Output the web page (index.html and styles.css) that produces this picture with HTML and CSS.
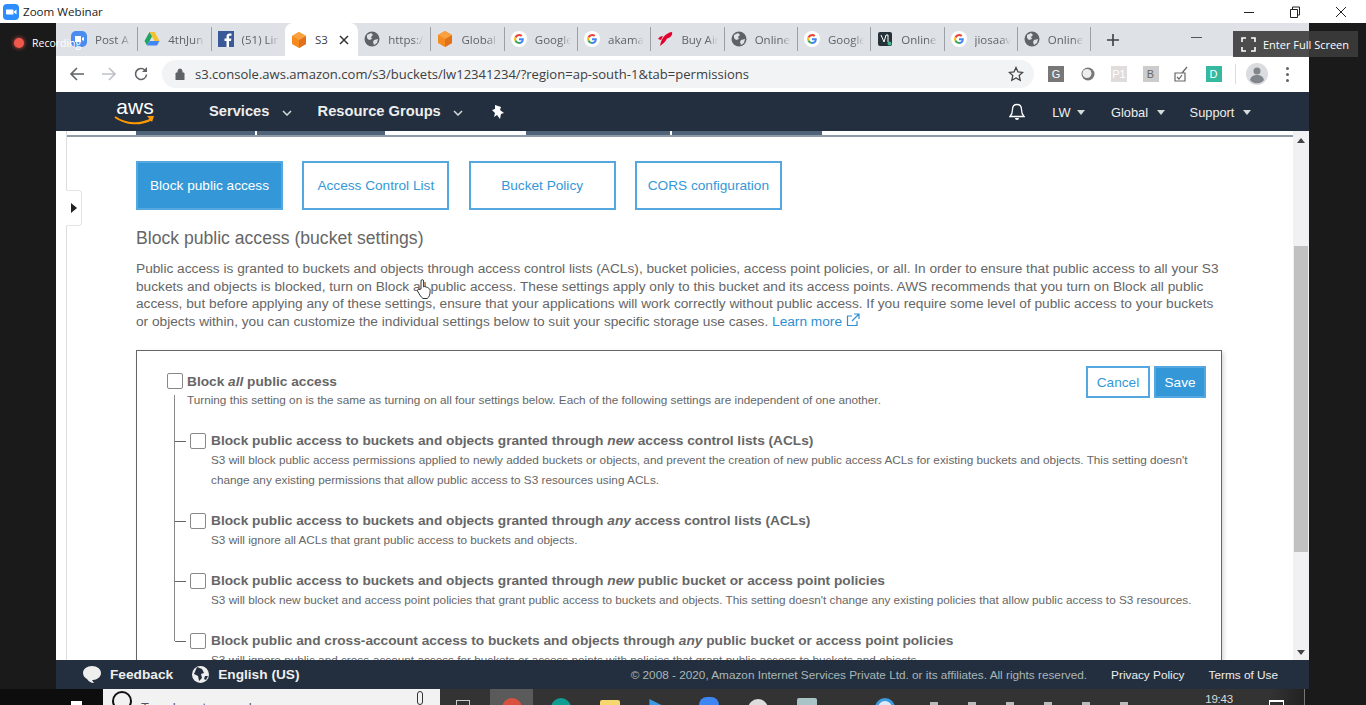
FILE: index.html
```html
<!DOCTYPE html>
<html lang="en">

<head>
    <meta charset="UTF-8">
    <meta name="viewport" content="width=device-width, initial-scale=1.0">
    <title>Zoom Webinar</title>
    <link rel="stylesheet" href="styles.css">
</head>

<body>
    <svg class="defs" width="0" height="0">
        <symbol id="i-cube" viewBox="0 0 16 16">
            <path d="M8 0l7 4v8l-7 4-7-4V4z" fill="#f58a1f" />
            <path d="M8 8l7-4v8l-7 4z" fill="#e0701a" />
            <path d="M8 0l7 4-7 4-7-4z" fill="#f9a03f" />
        </symbol>
        <symbol id="i-globe" viewBox="0 0 16 16">
            <circle cx="8" cy="8" r="7.5" fill="#5f6368" />
            <path d="M3 4l4-2 2 2-2 2 1 2-3 1-2-2zM10 9l4-1-1 4-3 2-1-3z" fill="#dee1e6" />
        </symbol>
        <symbol id="i-g" viewBox="0 0 16 16">
            <circle cx="8" cy="8" r="8" fill="#fff" />
            <path d="M12.8 8.2c0 2.900-2 4.800-4.800 4.800V11c1.400 0 2.400-.7 2.700-1.800H8V7.300h4.700z" fill="#4285f4" />
            <path d="M8 3a5 5 0 0 1 3.400 1.300L10 5.700A3 3 0 0 0 5.300 7L3.600 5.700A5 5 0 0 1 8 3z" fill="#ea4335" />
            <path d="M3.600 5.700L5.300 7a3 3 0 0 0 0 2L3.600 10.300a5 5 0 0 1 0-4.600z" fill="#fbbc05" />
            <path d="M3.600 10.300L5.300 9A3 3 0 0 0 8 11v2a5 5 0 0 1-4.400-2.700z" fill="#34a853" />
        </symbol>
        <symbol id="i-caret" viewBox="0 0 8 5">
            <path d="M0 0h8L4 5z" fill="currentColor" />
        </symbol>
    </svg>

    <header class="titlebar">
        <svg class="zoom-logo" width="16" height="16" viewBox="0 0 16 16">
            <rect width="16" height="16" rx="4" fill="#2d8cff" />
            <path d="M3 5.500h6.500a1 1 0 0 1 1 1v4H4a1 1 0 0 1-1-1zM11 7.500l2.500-2v5l-2.500-2z" fill="#fff" />
        </svg>
        <span class="app-name">Zoom Webinar</span>
        <div class="win-controls">
            <svg width="12" height="12" viewBox="0 0 12 12"><path d="M1 6.500h10" stroke="#222" /></svg>
            <svg width="12" height="12" viewBox="0 0 12 12"><path d="M1.500 3.500h7v8h-7zM3.500 3V1h7v8H9" fill="none" stroke="#222" /></svg>
            <svg width="12" height="12" viewBox="0 0 12 12"><path d="M1 1l10 10M11 1L1 11" stroke="#222" /></svg>
        </div>
    </header>

    <div class="stage">
        <div class="side-left"></div>

        <main class="browser">
            <div class="tabstrip">
                <div class="tab">
                    <svg width="16" height="16" viewBox="0 0 16 16"><rect width="16" height="16" rx="5" fill="#4a8cf0" /><path d="M4 5h6v6H4zM11 7l2-1v4l-2-1z" fill="#fff" /></svg>
                    <span class="tab-text">Post A</span>
                </div>
                <div class="tab">
                    <svg width="16" height="16" viewBox="0 0 16 16"><path d="M5.500 1h5l5 9h-5z" fill="#f6c02c" /><path d="M5.500 1L.5 10 3 14.500 8 5.500z" fill="#1fa463" /><path d="M3 14.500h10l2.500-4.500h-10z" fill="#4285f4" /></svg>
                    <span class="tab-text">4thJun</span>
                </div>
                <div class="tab tab-before-active">
                    <svg width="16" height="16" viewBox="0 0 16 16"><rect width="16" height="16" fill="#3b5998" /><path d="M11 16v-6h2l.4-2.500H11V6c0-.8.3-1.200 1.200-1.200h1.300V2.600C13 2.500 12.400 2.500 11.700 2.500 9.800 2.500 8.500 3.600 8.500 5.700v1.800h-2V10h2v6z" fill="#fff" /></svg>
                    <span class="tab-text">(51) Lin</span>
                </div>
                <div class="tab tab-active">
                    <svg width="16" height="16"><use href="#i-cube" /></svg>
                    <span class="tab-text">S3</span>
                    <svg class="tab-close" width="10" height="10" viewBox="0 0 10 10"><path d="M1 1l8 8M9 1L1 9" stroke="#333" stroke-width="1.500" /></svg>
                </div>
                <div class="tab">
                    <svg width="16" height="16"><use href="#i-globe" /></svg>
                    <span class="tab-text">https:/</span>
                </div>
                <div class="tab">
                    <svg width="16" height="16"><use href="#i-cube" /></svg>
                    <span class="tab-text">Global</span>
                </div>
                <div class="tab">
                    <svg width="16" height="16"><use href="#i-g" /></svg>
                    <span class="tab-text">Google</span>
                </div>
                <div class="tab">
                    <svg width="16" height="16"><use href="#i-g" /></svg>
                    <span class="tab-text">akama</span>
                </div>
                <div class="tab">
                    <svg width="16" height="16" viewBox="0 0 16 16"><path d="M3 15C4 8 8 2 15 1c1 3-2 6-5 6.500C9 10 6 13 3 15zM1 8c1-2 3-3 5-3L4 9z" fill="#e4002b" /></svg>
                    <span class="tab-text">Buy Air</span>
                </div>
                <div class="tab">
                    <svg width="16" height="16"><use href="#i-globe" /></svg>
                    <span class="tab-text">Online</span>
                </div>
                <div class="tab">
                    <svg width="16" height="16"><use href="#i-g" /></svg>
                    <span class="tab-text">Google</span>
                </div>
                <div class="tab">
                    <svg width="16" height="16" viewBox="0 0 16 16"><rect x="1" y="1" width="14" height="14" rx="2" fill="#26323a" /><path d="M4 4l3 7 2-7h2v7" fill="none" stroke="#fff" /><circle cx="12.500" cy="12.500" r="2" fill="#3fb68b" /></svg>
                    <span class="tab-text">Online</span>
                </div>
                <div class="tab">
                    <svg width="16" height="16"><use href="#i-g" /></svg>
                    <span class="tab-text">jiosaav</span>
                </div>
                <div class="tab">
                    <svg width="16" height="16"><use href="#i-globe" /></svg>
                    <span class="tab-text">Online</span>
                </div>
                <svg class="tab-new" width="14" height="14" viewBox="0 0 14 14"><path d="M7 1v12M1 7h12" stroke="#3c4043" stroke-width="1.600" /></svg>
                <span class="tab-ghost"></span>
            </div>

            <div class="toolbar">
                <svg class="tool" width="16" height="16" viewBox="0 0 16 16"><path d="M15 8H2M8 2L2 8l6 6" fill="none" stroke="#5f6368" stroke-width="1.600" /></svg>
                <svg class="tool" width="16" height="16" viewBox="0 0 16 16"><path d="M1 8h13M8 2l6 6-6 6" fill="none" stroke="#bdc1c6" stroke-width="1.600" /></svg>
                <svg class="tool" width="16" height="16" viewBox="0 0 16 16"><path d="M13.500 8.500A5.500 5.500 0 1 1 12 4.200" fill="none" stroke="#5f6368" stroke-width="1.600" /><path d="M14 1v5h-5z" fill="#5f6368" /></svg>
                <div class="omnibox">
                    <svg width="10" height="12" viewBox="0 0 10 12"><path d="M1 5h8v7H1zM3 5V3a2 2 0 0 1 4 0v2" fill="#5f6368" stroke="#5f6368" fill-rule="evenodd" /></svg>
                    <span class="url">s3.console.aws.amazon.com/s3/buckets/lw12341234/?region=ap-south-1&amp;tab=permissions</span>
                    <svg class="star" width="16" height="16" viewBox="0 0 16 16"><path d="M8 1.500l2 4.400 4.700.5-3.500 3.200 1 4.700L8 12l-4.200 2.300 1-4.700L1.300 6.400 6 5.900z" fill="none" stroke="#444" stroke-width="1.300" /></svg>
                </div>
                <div class="extensions">
                    <span class="ext ext-g">G</span>
                    <svg class="ext-svg" width="16" height="16" viewBox="0 0 16 16"><circle cx="8" cy="8" r="6.500" fill="#777" /><circle cx="7" cy="7.500" r="4.500" fill="#eee" /></svg>
                    <span class="ext ext-p">P1</span>
                    <span class="ext ext-b">B</span>
                    <svg class="ext-svg" width="16" height="16" viewBox="0 0 16 16"><path d="M1 7h10v8H1zM3 11l2 2 3-4M8 7l5-6" fill="none" stroke="#666" stroke-width="1.200" /></svg>
                    <span class="ext ext-d">D</span>
                </div>
                <div class="tool-sep"></div>
                <div class="avatar">
                    <svg width="22" height="22" viewBox="0 0 22 22"><circle cx="11" cy="11" r="11" fill="#dadce0" /><circle cx="11" cy="8" r="3.500" fill="#80868b" /><path d="M4 17c1-4 4-5 7-5s6 1 7 5a9 9 0 0 1-14 0z" fill="#80868b" /></svg>
                </div>
                <div class="menu-dots"><i></i><i></i><i></i></div>
            </div>

            <nav class="awsnav">
                <div class="aws-logo">
                    <span class="aws-word">aws</span>
                    <svg width="42" height="11" viewBox="0 0 42 11"><path d="M1 2c11 8 26 8 37 2" fill="none" stroke="#f90" stroke-width="2" /><path d="M33 1l7 0-2 6z" fill="#f90" /></svg>
                </div>
                <a class="nav-main nav-services">Services <svg class="nav-chev" width="10" height="6" viewBox="0 0 10 6"><path d="M1 1l4 4 4-4" fill="none" stroke="#d5dbdb" stroke-width="1.500" /></svg></a>
                <a class="nav-main nav-groups">Resource Groups <svg class="nav-chev" width="10" height="6" viewBox="0 0 10 6"><path d="M1 1l4 4 4-4" fill="none" stroke="#d5dbdb" stroke-width="1.500" /></svg></a>
                <svg class="nav-pin" width="14" height="14" viewBox="0 0 14 14"><path d="M4 0l6 2-1 3 4 3-3 1-1 5-3-4-3 2 1-4-3-3 3-1z" fill="#fff" /></svg>
                <div class="nav-right">
                    <svg class="nav-bell" width="16" height="18" viewBox="0 0 16 18"><path d="M8 1.500c3 0 4.500 2.300 4.500 5 0 4 1 5.500 2.500 7H1c1.500-1.500 2.500-3 2.500-7 0-2.700 1.500-5 4.500-5z" fill="none" stroke="#fff" stroke-width="1.300" /><path d="M6 15h4a2 2 0 0 1-4 0z" fill="#fff" /></svg>
                    <a class="nav-item nav-lw">LW <svg width="8" height="5"><use href="#i-caret" /></svg></a>
                    <a class="nav-item nav-global">Global <svg width="8" height="5"><use href="#i-caret" /></svg></a>
                    <a class="nav-item nav-support">Support <svg width="8" height="5"><use href="#i-caret" /></svg></a>
                </div>
            </nav>

            <div class="console">
                <div class="rail">
                    <div class="rail-handle"><svg width="6" height="10" viewBox="0 0 6 10"><path d="M0 0l6 5-6 5z" fill="#222" /></svg></div>
                </div>
                <section class="pane">
                    <div class="tab-remnants">
                        <span class="remnant remnant-a"></span>
                        <span class="remnant remnant-b"></span>
                    </div>

                    <div class="subtabs">
                        <a class="subtab subtab-on">Block public access</a>
                        <a class="subtab">Access Control List</a>
                        <a class="subtab">Bucket Policy</a>
                        <a class="subtab">CORS configuration</a>
                    </div>

                    <h2 class="section-title">Block public access (bucket settings)</h2>
                    <p class="intro">Public access is granted to buckets and objects through access control lists (ACLs), bucket policies, access point policies, or all. In order to ensure that public access to all your S3<br>buckets and objects is blocked, turn on Block all public access. These settings apply only to this bucket and its access points. AWS recommends that you turn on Block all public<br>access, but before applying any of these settings, ensure that your applications will work correctly without public access. If you require some level of public access to your buckets<br>or objects within, you can customize the individual settings below to suit your specific storage use cases. <a class="learn">Learn more <svg width="14" height="14" viewBox="0 0 14 14"><path d="M11 8v4.500H1.500V3H6M8 1h5v5M13 1L6 8" fill="none" stroke="#2e8fd0" stroke-width="1.200" /></svg></a></p>

                    <div class="settings-box">
                        <div class="box-head">
                            <div class="check-row">
                                <span class="checkbox"></span>
                                <span class="all-title">Block <em>all</em> public access</span>
                            </div>
                            <div class="box-actions">
                                <a class="btn btn-cancel">Cancel</a>
                                <a class="btn btn-save">Save</a>
                            </div>
                        </div>
                        <p class="all-desc">Turning this setting on is the same as turning on all four settings below. Each of the following settings are independent of one another.</p>

                        <div class="tree">
                            <div class="item">
                                <span class="tick"></span>
                                <span class="checkbox"></span>
                                <div class="item-body">
                                    <div class="item-title">Block public access to buckets and objects granted through <em>new</em> access control lists (ACLs)</div>
                                    <div class="item-desc">S3 will block public access permissions applied to newly added buckets or objects, and prevent the creation of new public access ACLs for existing buckets and objects. This setting doesn't<br>change any existing permissions that allow public access to S3 resources using ACLs.</div>
                                </div>
                            </div>
                            <div class="item">
                                <span class="tick"></span>
                                <span class="checkbox"></span>
                                <div class="item-body">
                                    <div class="item-title">Block public access to buckets and objects granted through <em>any</em> access control lists (ACLs)</div>
                                    <div class="item-desc">S3 will ignore all ACLs that grant public access to buckets and objects.</div>
                                </div>
                            </div>
                            <div class="item">
                                <span class="tick"></span>
                                <span class="checkbox"></span>
                                <div class="item-body">
                                    <div class="item-title">Block public access to buckets and objects granted through <em>new</em> public bucket or access point policies</div>
                                    <div class="item-desc">S3 will block new bucket and access point policies that grant public access to buckets and objects. This setting doesn't change any existing policies that allow public access to S3 resources.</div>
                                </div>
                            </div>
                            <div class="item">
                                <span class="tick"></span>
                                <span class="checkbox"></span>
                                <div class="item-body">
                                    <div class="item-title">Block public and cross-account access to buckets and objects through <em>any</em> public bucket or access point policies</div>
                                    <div class="item-desc">S3 will ignore public and cross-account access for buckets or access points with policies that grant public access to buckets and objects.</div>
                                </div>
                            </div>
                        </div>
                    </div>
                </section>
                <div class="scrollbar">
                    <svg width="8" height="5"><path d="M0 5h8L4 0z" fill="#444" /></svg>
                    <div class="thumb"></div>
                    <svg width="8" height="5"><path d="M0 0h8L4 5z" fill="#444" /></svg>
                </div>
            </div>

            <footer class="awsfoot">
                <svg class="foot-icon" width="18" height="17" viewBox="0 0 18 17"><path d="M9 0c5 0 9 3 9 7s-4 7-8 7l-1 0 2 3c-3 0-6-2-7-4-2-1-4-3-4-6 0-4 4-7 9-7z" fill="#eee" /></svg>
                <a class="foot-link">Feedback</a>
                <svg class="foot-icon foot-globe" width="17" height="17" viewBox="0 0 17 17"><circle cx="8.500" cy="8.500" r="8.500" fill="#eee" /><path d="M5 1l5 2 2 4-3 1 1 4-3 3-1-5-4-2zM13 10l3 0-2 4-2-1z" fill="#232f3e" /></svg>
                <a class="foot-link">English (US)</a>
                <span class="foot-copy">© 2008 - 2020, Amazon Internet Services Private Ltd. or its affiliates. All rights reserved.</span>
                <a class="foot-legal foot-privacy">Privacy Policy</a>
                <a class="foot-legal foot-terms">Terms of Use</a>
            </footer>
        </main>

        <div class="side-right"></div>
    </div>

    <div class="taskbar">
        <div class="tb-start"><span class="win-logo"></span></div>
        <div class="tb-search">
            <span class="tb-ring"></span>
            <span class="tb-hint">Type here to search</span>
            <span class="tb-mic"></span>
        </div>
        <div class="tb-apps">
            <span class="tb-task"></span>
            <span class="tb-cell tb-cell-on"><i class="tb-app tb-chrome"></i></span>
            <span class="tb-cell"><i class="tb-app tb-teal"></i></span>
            <span class="tb-cell"><i class="tb-app tb-folder"></i></span>
            <span class="tb-cell"><i class="tb-app tb-play"></i></span>
            <span class="tb-cell"><i class="tb-app tb-zoom"></i></span>
            <span class="tb-cell"><i class="tb-app tb-misc"></i></span>
            <span class="tb-cell"><i class="tb-app tb-pale"></i></span>
            <span class="tb-cell tb-cell-far"><i class="tb-app tb-round"></i></span>
            <span class="tb-tray"><i></i><i></i><i></i><i></i><i></i><i></i></span>
            <span class="tb-clock">19:43</span>
            <span class="tb-note"></span>
        </div>
        <div class="tb-end"></div>
    </div>

    <!-- things floating over the page -->
    <div class="recording"><span class="rec-dot"></span><span>Recording</span></div>
    <div class="fullscreen">
        <svg width="15" height="15" viewBox="0 0 15 15"><path d="M1 5V1h4M10 1h4v4M14 10v4h-4M5 14H1v-4" fill="none" stroke="#fff" stroke-width="1.600" /></svg>
        <span>Enter Full Screen</span>
    </div>
    <svg class="hand" width="16" height="22" viewBox="0 0 16 22"><path d="M5 11V3a1.300 1.300 0 0 1 2.600 0v6l1-.5 1.500.5 1.500.5 1.500 1c1 .5 1 1.500 1 3 0 3-1 6-3 7H7c-2-1-4-5-5.500-7.500-.5-1 .5-2 1.500-1.500z" fill="#fff" stroke="#333" /></svg>
</body>

</html>
```

FILE: styles.css
```css
* {
    box-sizing: border-box;
}

html,
body {
    margin: 0;
    width: 1366px;
    height: 705px;
    overflow: hidden;
}

body {
    font-family: "Liberation Sans", Arial, sans-serif;
    background: #1a1a1a;
    position: relative;
}

.defs {
    display: block;
    height: 0;
}

/* window title */
.titlebar {
    height: 23px;
    background: #fff;
    display: flex;
    align-items: center;
    padding-left: 3px;
}

.app-name {
    margin-left: 4px;
    font-family: "Open Sans", sans-serif;
    font-size: 11.6px;
    color: #222;
}

.win-controls {
    margin-left: auto;
    display: flex;
    gap: 34px;
    padding-right: 19px;
}

/* layout of the window */
.stage {
    display: flex;
    height: 666px;
}

.side-left {
    width: 56px;
    background: #1a1a1a;
}

.side-right {
    width: 57px;
    background: #1a1a1a;
}

.browser {
    width: 1253px;
    display: flex;
    flex-direction: column;
    background: #fff;
}

/* chrome tabs */
.tabstrip {
    height: 33px;
    flex: none;
    background: #dee1e6;
    display: flex;
    align-items: center;
    padding-left: 9px;
}

.tab {
    width: 73.3px;
    height: 24px;
    margin-bottom: 1px;
    display: flex;
    align-items: center;
    gap: 8px;
    padding: 0 6px;
    border-right: 1px solid #9aa0a6;
    overflow: hidden;
    flex: none;
}

.tab svg {
    flex: none;
}

.tab-text {
    font-family: "Open Sans", sans-serif;
    font-size: 11.5px;
    color: #5f6368;
    white-space: nowrap;
    overflow: hidden;
    flex: 1;
    -webkit-mask-image: linear-gradient(to right, #000 70%, transparent);
    mask-image: linear-gradient(to right, #000 70%, transparent);
}

.tab-before-active {
    border-right: 0;
}

.tab-active {
    height: 33px;
    margin-bottom: 0;
    align-self: flex-end;
    background: #fff;
    border-right: 0;
    border-radius: 8px 8px 0 0;
}

.tab-active .tab-text {
    color: #3c4043;
    mask-image: none;
    -webkit-mask-image: none;
}

.tab-close {
    margin-right: 3px;
}

.tab-new {
    margin-left: 15px;
}

.tab-ghost {
    width: 11px;
    height: 1px;
    margin: 0 0 5px 71px;
    background: #555;
}

/* address bar */
.toolbar {
    height: 36px;
    flex: none;
    display: flex;
    align-items: center;
    padding-left: 13px;
    background: #fff;
}

.tool {
    margin-right: 16px;
}

.omnibox {
    width: 872px;
    height: 28px;
    margin-left: -3px;
    border-radius: 14px;
    background: #f1f3f4;
    display: flex;
    align-items: center;
    padding: 0 10px 0 13px;
}

.url {
    margin-left: 10px;
    font-family: "Open Sans", sans-serif;
    font-size: 13.05px;
    color: #3c4043;
    white-space: nowrap;
}

.star {
    margin-left: auto;
}

.extensions {
    display: flex;
    align-items: center;
    gap: 15.500px;
    margin-left: 14px;
}

.ext {
    width: 16px;
    height: 16px;
    font-size: 11px;
    color: #fff;
    display: flex;
    align-items: center;
    justify-content: center;
}

.ext-g {
    background: #777;
}

.ext-p {
    background: #e0dcdc;
}

.ext-b {
    background: #ccc;
    color: #666;
}

.ext-d {
    background: #35b8a0;
}

.tool-sep {
    width: 1px;
    height: 20px;
    background: #dadce0;
    margin-left: 13px;
}

.avatar {
    margin-left: 10px;
    height: 22px;
}

.menu-dots {
    margin-left: 18px;
    display: flex;
    flex-direction: column;
    gap: 3px;
}

.menu-dots i {
    display: block;
    width: 3px;
    height: 3px;
    background: #5f6368;
    border-radius: 50%;
}

/* aws nav */
.awsnav {
    height: 39px;
    flex: none;
    background: #232f3e;
    display: flex;
    align-items: center;
    color: #fff;
}

.aws-logo {
    width: 42px;
    margin-left: 58px;
    display: flex;
    flex-direction: column;
    align-items: center;
}

.aws-word {
    font-size: 21px;
    line-height: 17px;
    color: #fff;
}

.nav-main {
    font-size: 14.700px;
    font-weight: bold;
    color: #eee;
    white-space: nowrap;
    margin-bottom: 2px;
}

.nav-chev {
    margin-left: 8px;
    vertical-align: 0;
}

.nav-services {
    margin-left: 53px;
}

.nav-groups {
    margin-left: 26px;
}

.nav-pin {
    margin-left: 28px;
}

.nav-right {
    margin-left: auto;
    display: flex;
    align-items: center;
    padding-right: 58px;
}

.nav-item {
    font-size: 12.800px;
    color: #eee;
    white-space: nowrap;
    margin-top: 2px;
}

.nav-item svg {
    margin-left: 5px;
    color: #d5dbdb;
    vertical-align: 2px;
}

.nav-lw {
    margin-left: 27px;
}

.nav-lw svg {
    margin-left: 3px;
}

.nav-global {
    margin-left: 26px;
}

.nav-support {
    margin-left: 25px;
}

/* console area */
.console {
    height: 529px;
    flex: none;
    display: flex;
    overflow: hidden;
}

.rail {
    width: 10px;
    flex: none;
    position: relative;
}

/* little handle that hangs out of the side rail */
.rail-handle {
    position: absolute;
    left: 10px;
    top: 59px;
    width: 16px;
    height: 36px;
    background: #fff;
    border: 1px solid #e1e4e8;
    border-left-color: #fff;
    border-radius: 0 4px 4px 0;
    display: flex;
    align-items: center;
    justify-content: center;
    z-index: 1;
}

.pane {
    flex: 1;
    min-width: 0;
    border-left: 1px solid #ddd;
    padding-left: 69px;
    overflow: hidden;
}

/* bottom of the tab row that has scrolled away under the nav */
.tab-remnants {
    height: 6px;
    margin-left: -69px;
    padding-left: 69px;
    border-bottom: 2px solid #8f9ca8;
    display: flex;
    margin-bottom: 24px;
}

.remnant {
    display: block;
    height: 4px;
    background: #4f6478;
}

.remnant-a {
    width: 249px;
    background: linear-gradient(to right, #4f6478 119px, #fff 119px, #fff 121px, #4f6478 121px);
}

.remnant-b {
    width: 296px;
    margin-left: 141px;
    background: linear-gradient(to right, #4f6478 144px, #fff 144px, #fff 146px, #4f6478 146px);
}

.subtabs {
    display: flex;
    gap: 19.3px;
}

.subtab {
    width: 147px;
    height: 49px;
    border: 2px solid #54a8df;
    display: flex;
    align-items: center;
    justify-content: center;
    font-size: 13.650px;
    color: #3498d8;
}

.subtab-on {
    background: #3498d8;
    color: #fff;
}

.section-title {
    margin: 18px 0 0;
    font-size: 17.600px;
    line-height: 20px;
    font-weight: normal;
    color: #666;
}

.intro {
    margin: 12px 0 0;
    font-size: 13.700px;
    line-height: 17.600px;
    color: #666;
    white-space: nowrap;
}

.learn {
    color: #2e8fd0;
}

.learn svg {
    vertical-align: -1px;
}

.settings-box {
    width: 1086px;
    height: 400px;
    margin-top: 20px;
    border: 1px solid #666;
    box-shadow: 2px 2px 4px rgba(0, 0, 0, 0.15);
    padding: 15px 15px 0 30px;
}

.box-head {
    display: flex;
    justify-content: space-between;
    align-items: flex-start;
}

.check-row {
    display: flex;
    align-items: center;
    gap: 4px;
    margin-top: 7px;
}

.checkbox {
    width: 16px;
    height: 16px;
    flex: none;
    border: 1px solid #888;
    border-radius: 2px;
    background: #fff;
}

.all-title {
    font-size: 13.700px;
    font-weight: bold;
    color: #666;
}

.box-actions {
    display: flex;
    gap: 4px;
}

.btn {
    height: 32px;
    display: flex;
    align-items: center;
    justify-content: center;
    font-size: 13.650px;
    border: 2px solid #54a8df;
}

.btn-cancel {
    width: 64px;
    color: #3498d8;
}

.btn-save {
    width: 52px;
    background: #3498d8;
    color: #fff;
}

.all-desc {
    margin: -6px 0 0 20px;
    font-size: 11.760px;
    line-height: 16px;
    color: #666;
}

.tree {
    margin: -13px 0 0 7px;
    padding-top: 37px;
    height: 246px;
    border-left: 1px solid #888;
}

.item {
    display: flex;
    align-items: flex-start;
    margin-bottom: 22px;
}

.tick {
    width: 11px;
    height: 1px;
    background: #666;
    margin-top: 9px;
    margin-right: 4px;
    flex: none;
}

.item .checkbox {
    margin-top: 1px;
}

.item-body {
    margin-left: 5px;
    white-space: nowrap;
}

.item-title {
    font-size: 13.700px;
    line-height: 18px;
    font-weight: bold;
    color: #666;
}

.item-desc {
    font-size: 11.760px;
    line-height: 20px;
    color: #666;
}

.scrollbar {
    width: 16px;
    flex: none;
    background: #f1f1f4;
    display: flex;
    flex-direction: column;
    align-items: center;
    padding: 7px 0 5px;
}

.thumb {
    width: 14px;
    height: 306px;
    margin-top: 103px;
    margin-bottom: auto;
    background: #c1c1c1;
}

/* aws footer */
.awsfoot {
    height: 29px;
    flex: none;
    background: #232f3e;
    display: flex;
    align-items: center;
    padding-left: 27px;
}

.foot-link {
    font-size: 13.700px;
    font-weight: bold;
    color: #eee;
    margin-left: 9px;
    white-space: nowrap;
}

.foot-globe {
    margin-left: 19px;
}

.foot-copy {
    margin-left: auto;
    font-size: 11.770px;
    color: #aab7b8;
    white-space: nowrap;
}

.foot-legal {
    font-size: 11.800px;
    color: #eee;
    white-space: nowrap;
}

.foot-privacy {
    margin-left: 24px;
}

.foot-terms {
    margin-left: 24px;
    margin-right: 31px;
}

/* windows taskbar, mostly cut off at the bottom */
.taskbar {
    height: 16px;
    display: flex;
    overflow: hidden;
}

.tb-start {
    width: 103px;
    background: #0d0d0d;
}

.win-logo {
    display: block;
    width: 11px;
    height: 10px;
    margin: 12px 0 0 71px;
    background: #fff;
}

.tb-search {
    width: 337px;
    background: #f2f2f2;
    display: flex;
    align-items: flex-start;
}

.tb-ring {
    width: 20px;
    height: 20px;
    margin: 2px 0 0 9px;
    border: 2px solid #111;
    border-radius: 50%;
    flex: none;
}

.tb-hint {
    margin: 11px 0 0 9px;
    font-size: 13px;
    color: #555;
    white-space: nowrap;
}

.tb-mic {
    width: 6px;
    height: 14px;
    margin: 2px 17px 0 auto;
    border: 1px solid #333;
    border-radius: 3px;
}

.tb-apps {
    width: 865px;
    background: linear-gradient(to right, #333 96%, #222);
    display: flex;
    align-items: flex-start;
    border-right: 1px solid #777;
}

.tb-task {
    width: 50px;
}

.tb-task::before {
    content: "";
    display: block;
    width: 12px;
    height: 6px;
    margin: 11px 0 0 16px;
    border: 1px solid #ccc;
}

.tb-cell {
    width: 43px;
    height: 16px;
    margin-right: 6.300px;
    display: flex;
    justify-content: center;
}

.tb-cell-on {
    background: #5a5a5a;
}

.tb-app {
    display: block;
    width: 20px;
    height: 20px;
    margin-top: 9px;
    border-radius: 50%;
}

.tb-chrome {
    background: #d9503f;
}

.tb-teal {
    background: #0f9d94;
}

.tb-folder {
    background: #f5d76e;
    border-radius: 2px;
    margin-top: 11px;
}

.tb-play {
    background: #3a9be0;
    border-radius: 0;
    margin-top: 10px;
    clip-path: polygon(0 0, 100% 50%, 0 100%);
}

.tb-zoom {
    background: #3f86f5;
    border-radius: 8px;
    margin-top: 8px;
}

.tb-misc {
    background: #ddd;
    margin-top: 10px;
}

.tb-pale {
    background: #a9c4c7;
    border-radius: 2px;
}

.tb-cell-far {
    margin-left: 28px;
}

.tb-round {
    background: #dfeaf2;
    border: 3px solid #3a9be0;
}

.tb-tray {
    display: flex;
    gap: 30px;
    margin: 13px 0 0 18px;
}

.tb-tray i {
    display: block;
    width: 8px;
    height: 3px;
    background: #bbb;
}

.tb-clock {
    margin: 3px 0 0 auto;
    font-size: 11.500px;
    line-height: 14px;
    letter-spacing: -0.2px;
    color: #ddd;
}

.tb-note {
    width: 15px;
    height: 14px;
    margin: 11px 20px 0 36px;
    border: 1px solid #fff;
    border-top-width: 2px;
    flex: none;
}

.tb-end {
    flex: 1;
    background: #1a1a1a;
}

/* zoom overlays */
.recording {
    position: absolute;
    left: 14px;
    top: 36px;
    display: flex;
    align-items: center;
    gap: 8px;
    font-family: "Open Sans", sans-serif;
    font-size: 10.500px;
    color: #fff;
}

.rec-dot {
    width: 10px;
    height: 10px;
    border-radius: 50%;
    background: #f0584c;
    box-shadow: 0 0 4px #f0584c;
}

.fullscreen {
    position: absolute;
    left: 1233px;
    top: 31px;
    width: 125px;
    height: 26px;
    background: rgba(60, 60, 60, 0.9);
    display: flex;
    align-items: center;
    gap: 7px;
    padding-left: 8px;
    font-family: "Open Sans", sans-serif;
    font-size: 11px;
    color: #fff;
    white-space: nowrap;
}

.hand {
    position: absolute;
    left: 416px;
    top: 278px;
}
```
